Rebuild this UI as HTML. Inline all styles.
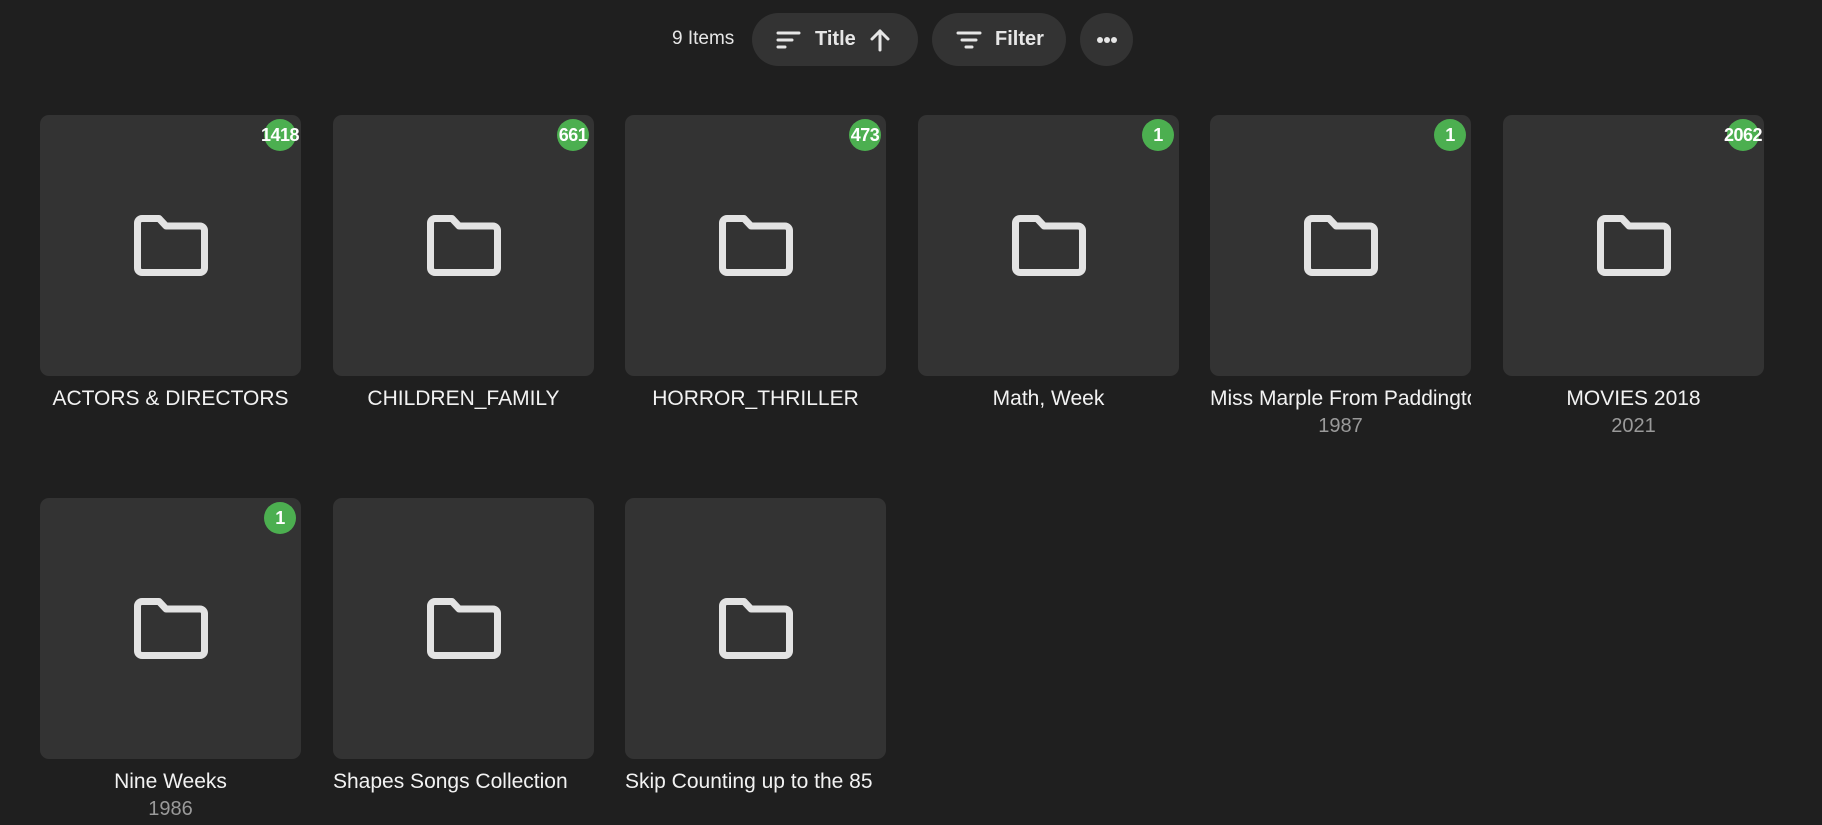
<!DOCTYPE html>
<html><head><meta charset="utf-8"><style>
*{margin:0;padding:0;box-sizing:border-box}
body{width:1822px;height:825px;background:#1f1f1f;font-family:"Liberation Sans",Arial,sans-serif;color:#fff;position:relative;overflow:hidden}
.items{position:absolute;left:672px;top:27px;font-size:19px;color:#e6e6e6;line-height:24px}
.pill{position:absolute;top:13px;height:53px;border-radius:27px;background:#333;display:flex;align-items:center;font-weight:bold;font-size:20px;color:#e6e6e6}
.card{position:absolute;width:261px}
.box{width:261px;height:261px;background:#333;border-radius:9px;position:relative}
.box svg{position:absolute;left:94px;top:100px}
.badge{position:absolute;left:224px;top:4px;width:32px;height:32px;border-radius:50%;background:#4caf50;display:flex;justify-content:center;align-items:center;font-weight:bold;font-size:18px;white-space:nowrap;color:#fff;letter-spacing:-0.5px}
.t{margin-top:9px;font-size:21px;line-height:28px;text-align:center;white-space:nowrap;overflow:hidden;color:#f2f2f2}
.t.l{text-align:left}
.y{font-size:20px;line-height:24px;text-align:center;color:#9a9a9a;margin-top:1px}
</style></head><body>
<div class="items">9 Items</div>
<div class="pill" style="left:752px;width:166px">
<svg style="margin-left:24px" width="26" height="22" viewBox="0 0 26 22"><g stroke="#e6e6e6" stroke-width="3" stroke-linecap="round"><line x1="2" y1="4" x2="23" y2="4"/><line x1="2" y1="11" x2="16" y2="11"/><line x1="2" y1="18" x2="9" y2="18"/></g></svg>
<span style="margin-left:13px">Title</span>
<svg style="margin-left:13px" width="22" height="24" viewBox="0 0 22 24"><g stroke="#e6e6e6" stroke-width="3" fill="none" stroke-linecap="round" stroke-linejoin="round"><line x1="11" y1="3" x2="11" y2="22"/><polyline points="3,11 11,3 19,11"/></g></svg>
</div>
<div class="pill" style="left:932px;width:134px">
<svg style="margin-left:24px" width="26" height="22" viewBox="0 0 26 22"><g stroke="#e6e6e6" stroke-width="3" stroke-linecap="round"><line x1="2" y1="4" x2="24" y2="4"/><line x1="6" y1="11" x2="20" y2="11"/><line x1="10" y1="18" x2="16" y2="18"/></g></svg>
<span style="margin-left:13px">Filter</span>
</div>
<div class="pill" style="left:1080px;width:53px;justify-content:center">
<svg width="22" height="8" viewBox="0 0 22 8"><g fill="#e6e6e6"><circle cx="4" cy="4" r="3"/><circle cx="11" cy="4" r="3"/><circle cx="18" cy="4" r="3"/></g></svg>
</div>

<div class="card" style="left:40px;top:115px"><div class="box"><svg width="74" height="61" viewBox="0 0 74 61"><path d="M8 3.5H25L32 11H66A4.5 4.5 0 0 1 70.5 15.5V53A4.5 4.5 0 0 1 66 57.5H8A4.5 4.5 0 0 1 3.5 53V8A4.5 4.5 0 0 1 8 3.5Z" fill="none" stroke="#e3e3e3" stroke-width="7" stroke-linejoin="round"/></svg><div class="badge">1418</div></div><div class="t">ACTORS &amp; DIRECTORS</div></div>
<div class="card" style="left:333px;top:115px"><div class="box"><svg width="74" height="61" viewBox="0 0 74 61"><path d="M8 3.5H25L32 11H66A4.5 4.5 0 0 1 70.5 15.5V53A4.5 4.5 0 0 1 66 57.5H8A4.5 4.5 0 0 1 3.5 53V8A4.5 4.5 0 0 1 8 3.5Z" fill="none" stroke="#e3e3e3" stroke-width="7" stroke-linejoin="round"/></svg><div class="badge">661</div></div><div class="t">CHILDREN_FAMILY</div></div>
<div class="card" style="left:625px;top:115px"><div class="box"><svg width="74" height="61" viewBox="0 0 74 61"><path d="M8 3.5H25L32 11H66A4.5 4.5 0 0 1 70.5 15.5V53A4.5 4.5 0 0 1 66 57.5H8A4.5 4.5 0 0 1 3.5 53V8A4.5 4.5 0 0 1 8 3.5Z" fill="none" stroke="#e3e3e3" stroke-width="7" stroke-linejoin="round"/></svg><div class="badge">473</div></div><div class="t">HORROR_THRILLER</div></div>
<div class="card" style="left:918px;top:115px"><div class="box"><svg width="74" height="61" viewBox="0 0 74 61"><path d="M8 3.5H25L32 11H66A4.5 4.5 0 0 1 70.5 15.5V53A4.5 4.5 0 0 1 66 57.5H8A4.5 4.5 0 0 1 3.5 53V8A4.5 4.5 0 0 1 8 3.5Z" fill="none" stroke="#e3e3e3" stroke-width="7" stroke-linejoin="round"/></svg><div class="badge">1</div></div><div class="t">Math, Week</div></div>
<div class="card" style="left:1210px;top:115px"><div class="box"><svg width="74" height="61" viewBox="0 0 74 61"><path d="M8 3.5H25L32 11H66A4.5 4.5 0 0 1 70.5 15.5V53A4.5 4.5 0 0 1 66 57.5H8A4.5 4.5 0 0 1 3.5 53V8A4.5 4.5 0 0 1 8 3.5Z" fill="none" stroke="#e3e3e3" stroke-width="7" stroke-linejoin="round"/></svg><div class="badge">1</div></div><div class="t l">Miss Marple From Paddington</div><div class="y">1987</div></div>
<div class="card" style="left:1503px;top:115px"><div class="box"><svg width="74" height="61" viewBox="0 0 74 61"><path d="M8 3.5H25L32 11H66A4.5 4.5 0 0 1 70.5 15.5V53A4.5 4.5 0 0 1 66 57.5H8A4.5 4.5 0 0 1 3.5 53V8A4.5 4.5 0 0 1 8 3.5Z" fill="none" stroke="#e3e3e3" stroke-width="7" stroke-linejoin="round"/></svg><div class="badge">2062</div></div><div class="t">MOVIES 2018</div><div class="y">2021</div></div>

<div class="card" style="left:40px;top:498px"><div class="box"><svg width="74" height="61" viewBox="0 0 74 61"><path d="M8 3.5H25L32 11H66A4.5 4.5 0 0 1 70.5 15.5V53A4.5 4.5 0 0 1 66 57.5H8A4.5 4.5 0 0 1 3.5 53V8A4.5 4.5 0 0 1 8 3.5Z" fill="none" stroke="#e3e3e3" stroke-width="7" stroke-linejoin="round"/></svg><div class="badge">1</div></div><div class="t">Nine Weeks</div><div class="y">1986</div></div>
<div class="card" style="left:333px;top:498px"><div class="box"><svg width="74" height="61" viewBox="0 0 74 61"><path d="M8 3.5H25L32 11H66A4.5 4.5 0 0 1 70.5 15.5V53A4.5 4.5 0 0 1 66 57.5H8A4.5 4.5 0 0 1 3.5 53V8A4.5 4.5 0 0 1 8 3.5Z" fill="none" stroke="#e3e3e3" stroke-width="7" stroke-linejoin="round"/></svg></div><div class="t l">Shapes Songs Collection</div></div>
<div class="card" style="left:625px;top:498px"><div class="box"><svg width="74" height="61" viewBox="0 0 74 61"><path d="M8 3.5H25L32 11H66A4.5 4.5 0 0 1 70.5 15.5V53A4.5 4.5 0 0 1 66 57.5H8A4.5 4.5 0 0 1 3.5 53V8A4.5 4.5 0 0 1 8 3.5Z" fill="none" stroke="#e3e3e3" stroke-width="7" stroke-linejoin="round"/></svg></div><div class="t l">Skip Counting up to the 85</div></div>
</body></html>
